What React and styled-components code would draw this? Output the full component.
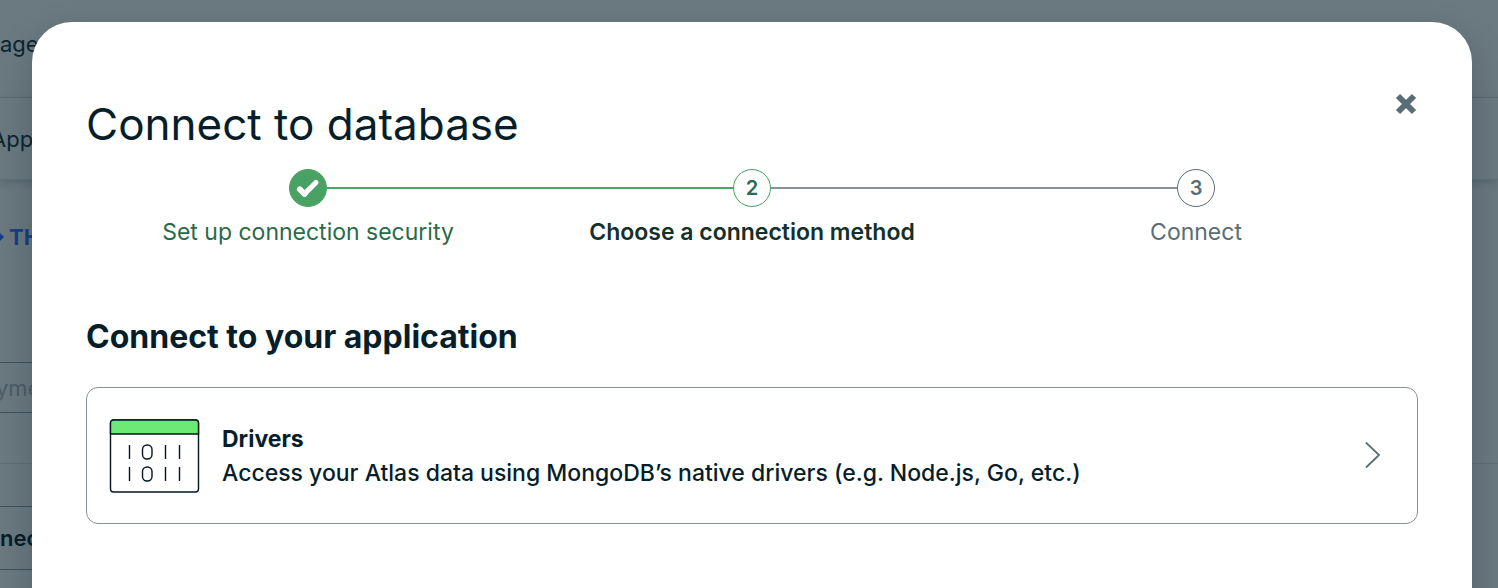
import React from "react";
import styled, { createGlobalStyle } from "styled-components";

const GlobalStyle = createGlobalStyle`
  *, *::before, *::after { box-sizing: border-box; }
  html, body, #root { height: 100%; }
  body {
    margin: 0;
    overflow: hidden;
    background: #6b7980;
    color: #061e2a;
    font-family: Inter, "Liberation Sans", sans-serif;
  }
  button { font: inherit; }
  h1, h2, p, ol { margin: 0; padding: 0; }
`;

const Screen = styled.div`
  position: relative;
  height: 100%;
  overflow: hidden;
`;

const Backdrop = styled.div`
  position: absolute;
  inset: 0;
  overflow: hidden;
  font-size: 22px;
  white-space: nowrap;
  color: #0b2531;
`;

const Bar = styled.div`
  display: flex;
  align-items: center;
  height: ${(p) => p.$height}px;
  padding-bottom: ${(p) => p.$lift || 0}px;
  border-bottom: 1px solid #5f6f77;
  box-shadow: ${(p) => (p.$raised ? "0 3px 8px rgba(20, 45, 55, 0.2)" : "none")};
`;

const Cut = styled.span`
  margin-left: ${(p) => -p.$by}px;
`;

const Crumb = styled.div`
  display: flex;
  align-items: center;
  gap: 4px;
  height: 114px;
  margin-left: -9px;
  color: #183f82;
  font-weight: 700;
`;

const Field = styled.div`
  display: flex;
  align-items: center;
  width: 50%;
  height: ${(p) => p.$height}px;
  margin-top: ${(p) => p.$top}px;
  border: solid #3f515b;
  border-width: 1px 0;
  color: ${(p) => p.$color};
  font-weight: ${(p) => p.$weight || 400};
`;

const Rule = styled.div`
  height: 1px;
  margin-top: 50px;
  background: #5f6f77;
`;

const Dialog = styled.section`
  position: relative;
  min-height: 100%;
  margin: 22px 26px 0 32px;
  padding: 74px 54px 0;
  border-radius: 40px 40px 0 0;
  background: #fff;
  box-shadow: 0 16px 40px -4px rgba(0, 30, 43, 0.3);
`;

const Header = styled.header`
  display: flex;
  justify-content: space-between;
  align-items: flex-start;
`;

const Title = styled.h1`
  font-size: 44px;
  line-height: 56px;
  font-weight: 400;
`;

const CloseButton = styled.button`
  display: flex;
  margin-top: -7px;
  margin-right: -3px;
  padding: 0;
  border: 0;
  background: none;
  color: #5c6c75;
  cursor: pointer;
`;

const Stepper = styled.ol`
  display: flex;
  margin-top: 17px;
  list-style: none;
`;

const stepColors = { done: "#2a6a48", current: "#13302a", next: "#5c6c75" };

const Step = styled.li`
  flex: 1;
  text-align: center;
  font-size: 23px;
  line-height: 32px;
  color: ${(p) => stepColors[p.$state]};
  font-weight: ${(p) => (p.$state === "current" ? 600 : 400)};
`;

const Track = styled.div`
  display: flex;
  align-items: center;
  margin-bottom: 9px;
`;

const lineColors = { none: "transparent", green: "#4ba366", gray: "#889397" };

const Line = styled.span`
  flex: 1;
  height: 2px;
  background: ${(p) => lineColors[p.$tone]};
`;

const markers = {
  done: { fill: "#49a263", border: "#49a263", text: "#fff" },
  current: { fill: "#fff", border: "#49a263", text: "#2a6a50" },
  next: { fill: "#fff", border: "#5c6c75", text: "#5c6c75" },
};

const Marker = styled.span`
  display: flex;
  align-items: center;
  justify-content: center;
  width: 38px;
  height: 38px;
  border-radius: 50%;
  border: 1px solid ${(p) => markers[p.$state].border};
  background: ${(p) => markers[p.$state].fill};
  color: ${(p) => markers[p.$state].text};
  font-size: 20px;
  font-weight: 600;
`;

const SectionTitle = styled.h2`
  margin-top: 67px;
  font-size: 32px;
  line-height: 44px;
  font-weight: 700;
`;

const Option = styled.a`
  display: flex;
  align-items: center;
  gap: 22px;
  min-height: 137px;
  margin-top: 28px;
  padding: 0 36px 0 22px;
  border: 1px solid #889397;
  border-radius: 12px;
  color: inherit;
  text-decoration: none;
  svg { flex: none; }
`;

const OptionText = styled.div`
  flex: 1;
  font-size: 23px;
  line-height: 34px;
  font-weight: 500;
  strong { display: block; font-weight: 700; }
`;

const CloseIcon = () => (
  <svg width="30" height="30" viewBox="0 0 30 30" aria-hidden="true">
    <path d="M7 7L23 23M23 7L7 23" stroke="currentColor" strokeWidth="6" />
  </svg>
);

const CheckIcon = () => (
  <svg width="24" height="20" viewBox="0 0 24 20" fill="none" aria-hidden="true">
    <path d="M3.800 11.300L8.500 16" stroke="currentColor" strokeWidth="5.800" strokeLinecap="round" />
    <path d="M8.500 15.800L20 4.500" stroke="currentColor" strokeWidth="5.200" strokeLinecap="round" />
  </svg>
);

const CodeWindowIcon = () => (
  <svg width="91" height="74" viewBox="0 0 91 74" fill="none" stroke="#061621" strokeWidth="1.400" aria-hidden="true">
    <rect x="1.500" y="1" width="88" height="72" rx="3" fill="#fff" />
    <path d="M1.500 15V4a3 3 0 0 1 3-3H86.500a3 3 0 0 1 3 3V15Z" fill="#6dea75" />
    <path d="M20.500 26V40M56.500 26V40M70.500 26V40M20.500 48V62M56.500 48V62M70.500 48V62" />
    <rect x="33.500" y="26" width="9.500" height="14" rx="4.500" />
    <rect x="33.500" y="48" width="9.500" height="14" rx="4.500" />
  </svg>
);

const ChevronIcon = () => (
  <svg width="16" height="28" viewBox="0 0 16 28" fill="none" aria-hidden="true">
    <path d="M1 0.500L14 13L1 25.500" stroke="#5c6c75" strokeWidth="1.800" />
  </svg>
);

const ArrowIcon = () => (
  <svg width="14" height="16" viewBox="0 0 14 16" fill="none" aria-hidden="true">
    <path d="M6 3L11 8L6 13" stroke="currentColor" strokeWidth="3" />
  </svg>
);

const steps = [
  { label: "Set up connection security", state: "done", mark: <CheckIcon />, before: "none", after: "green" },
  { label: "Choose a connection method", state: "current", mark: "2", before: "green", after: "gray" },
  { label: "Connect", state: "next", mark: "3", before: "gray", after: "none" },
];

export default function App() {
  return (
    <Screen>
      <GlobalStyle />
      <Backdrop aria-hidden="true">
        <Bar $height={98} $lift={10}>age</Bar>
        <Bar $height={82} $raised><Cut $by={9}>App</Cut></Bar>
        <Crumb><ArrowIcon />TH</Crumb>
        <Field $height={51} $top={68} $color="#4d5d66"><Cut $by={4}>yme</Cut></Field>
        <Rule />
        <Field $height={64} $top={42} $color="#061f2b" $weight={600}>nec</Field>
      </Backdrop>
      <Dialog role="dialog" aria-labelledby="dialog-title">
        <Header>
          <Title id="dialog-title">Connect to database</Title>
          <CloseButton type="button" aria-label="Close"><CloseIcon /></CloseButton>
        </Header>
        <Stepper>
          {steps.map((s) => (
            <Step key={s.label} $state={s.state} aria-current={s.state === "current" ? "step" : undefined}>
              <Track>
                <Line $tone={s.before} />
                <Marker $state={s.state}>{s.mark}</Marker>
                <Line $tone={s.after} />
              </Track>
              {s.label}
            </Step>
          ))}
        </Stepper>
        <SectionTitle>Connect to your application</SectionTitle>
        <Option href="#drivers">
          <CodeWindowIcon />
          <OptionText>
            <strong>Drivers</strong>
            Access your Atlas data using MongoDB’s native drivers (e.g. Node.js, Go, etc.)
          </OptionText>
          <ChevronIcon />
        </Option>
      </Dialog>
    </Screen>
  );
}
